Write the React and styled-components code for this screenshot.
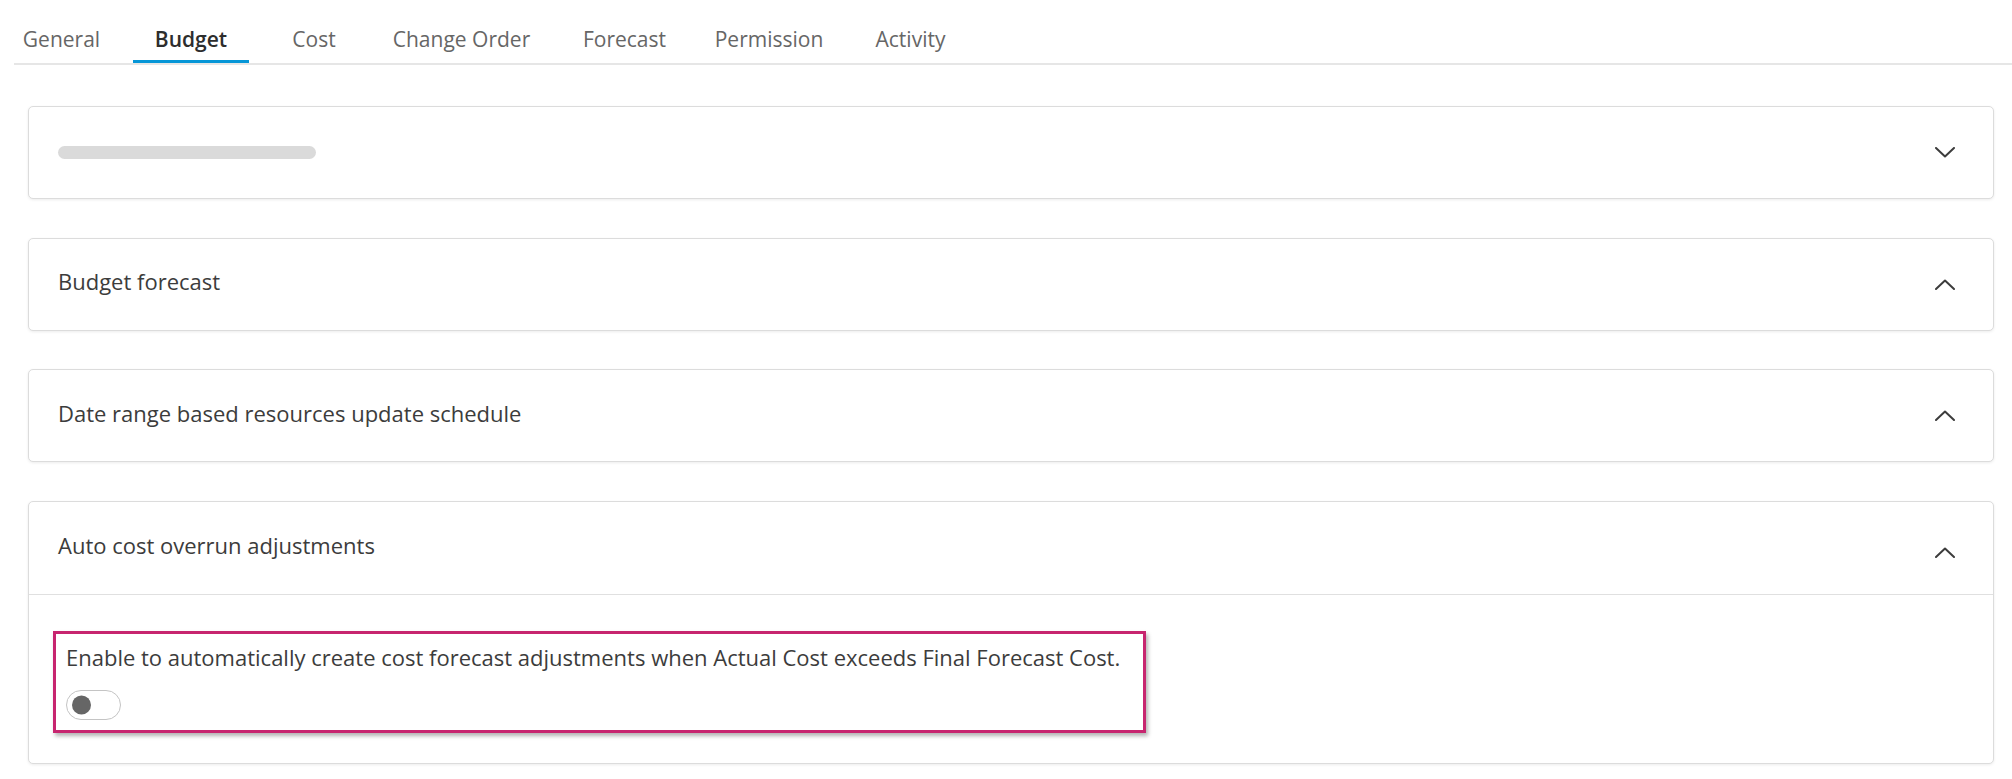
import React from "react";
import styled, { createGlobalStyle } from "styled-components";

const Global = createGlobalStyle`
  html, body { margin: 0; padding: 0; background: #ffffff; }
  body { font-family: "Open Sans", "Noto Sans", "Liberation Sans", Arial, sans-serif; color: #3c3c3c; }
  * { box-sizing: border-box; }
`;

const Page = styled.div`
  width: 2012px;
  min-height: 779px;
  background: #fff;
`;

const TabBar = styled.nav`
  display: flex;
  margin-left: 14px;
  height: 65px;
  border-bottom: 2px solid #e6e6e6;
`;

const Tab = styled.div`
  position: relative;
  width: ${(p) => p.$w}px;
  height: 63px;
  display: flex;
  justify-content: center;
  padding-top: 25px;
  font-size: 21px;
  line-height: 28px;
  white-space: nowrap;
  color: ${(p) => (p.$active ? "#2d2d2d" : "#666666")};
  font-weight: ${(p) => (p.$active ? 600 : 400)};
  cursor: pointer;
  &::after {
    content: "";
    display: ${(p) => (p.$active ? "block" : "none")};
    position: absolute;
    left: 50%;
    transform: translateX(-50%);
    bottom: 0;
    width: 116px;
    height: 3px;
    background: #0696d7;
  }
`;

const Content = styled.main`
  display: flex;
  flex-direction: column;
  gap: 38.5px;
  padding: 41px 18px 0 28px;
`;

const Card = styled.section`
  border: 1px solid #dcdcdc;
  border-radius: 5px;
  background: #fff;
  box-shadow: 0 1px 3px rgba(0, 0, 0, 0.08);
`;

const Header = styled.div`
  display: flex;
  align-items: center;
  justify-content: space-between;
  height: ${(p) => (p.$open ? 93 : 91)}px;
  padding: 0 38px 0 29px;
  border-bottom: ${(p) => (p.$open ? "1px solid #e0e0e0" : "none")};
`;

const Title = styled.span`
  font-size: 22px;
  line-height: 28px;
  margin-bottom: 6px;
  color: #3c3c3c;
`;

const Skeleton = styled.div`
  width: 258px;
  height: 13px;
  border-radius: 7px;
  background: #dadada;
`;

const ChevronIcon = styled.svg`
  width: 20px;
  height: 11px;
  flex: none;
  margin-top: ${(p) => p.$dy || 0}px;
`;

const Body = styled.div`
  padding: 36px 25px 30px 24px;
`;

const Highlight = styled.div`
  width: 1093px;
  border: 3px solid #c7256f;
  padding: 9px 10px 10px 10px;
  display: flex;
  flex-direction: column;
  gap: 19px;
  box-shadow: 2px 3px 4px rgba(0, 0, 0, 0.3);
`;

const Description = styled.p`
  margin: 0;
  font-size: 22px;
  line-height: 28px;
  color: #3c3c3c;
  white-space: nowrap;
`;

const Switch = styled.button`
  position: relative;
  width: 55px;
  height: 30px;
  padding: 0;
  border: 1.5px solid #c4c4c4;
  border-radius: 15px;
  background: #fff;
  cursor: pointer;
  &::before {
    content: "";
    position: absolute;
    left: 5px;
    top: 50%;
    transform: translateY(-50%);
    width: 19px;
    height: 19px;
    border-radius: 50%;
    background: #666;
  }
`;

const Chevron = ({ up, dy }) => (
  <ChevronIcon viewBox="0 0 20 11" $dy={dy}>
    <path
      d={up ? "M1 10 L10 1.5 L19 10" : "M1 1 L10 9.5 L19 1"}
      fill="none"
      stroke="#3c3c3c"
      strokeWidth="2"
      strokeLinecap="round"
      strokeLinejoin="round"
    />
  </ChevronIcon>
);

const tabs = [
  { label: "General", w: 95 },
  { label: "Budget", w: 164, active: true },
  { label: "Cost", w: 82 },
  { label: "Change Order", w: 213 },
  { label: "Forecast", w: 113 },
  { label: "Permission", w: 176 },
  { label: "Activity", w: 107 },
];

export default function App() {
  return (
    <Page>
      <Global />
      <TabBar>
        {tabs.map((t) => (
          <Tab key={t.label} $w={t.w} $active={t.active}>
            {t.label}
          </Tab>
        ))}
      </TabBar>
      <Content>
        <Card>
          <Header>
            <Skeleton />
            <Chevron />
          </Header>
        </Card>
        <Card>
          <Header>
            <Title>Budget forecast</Title>
            <Chevron up />
          </Header>
        </Card>
        <Card>
          <Header>
            <Title>Date range based resources update schedule</Title>
            <Chevron up />
          </Header>
        </Card>
        <Card>
          <Header $open>
            <Title>Auto cost overrun adjustments</Title>
            <Chevron up dy={9} />
          </Header>
          <Body>
            <Highlight>
              <Description>
                Enable to automatically create cost forecast adjustments when Actual Cost exceeds Final Forecast Cost.
              </Description>
              <Switch aria-label="Auto cost overrun adjustments" />
            </Highlight>
          </Body>
        </Card>
      </Content>
    </Page>
  );
}
